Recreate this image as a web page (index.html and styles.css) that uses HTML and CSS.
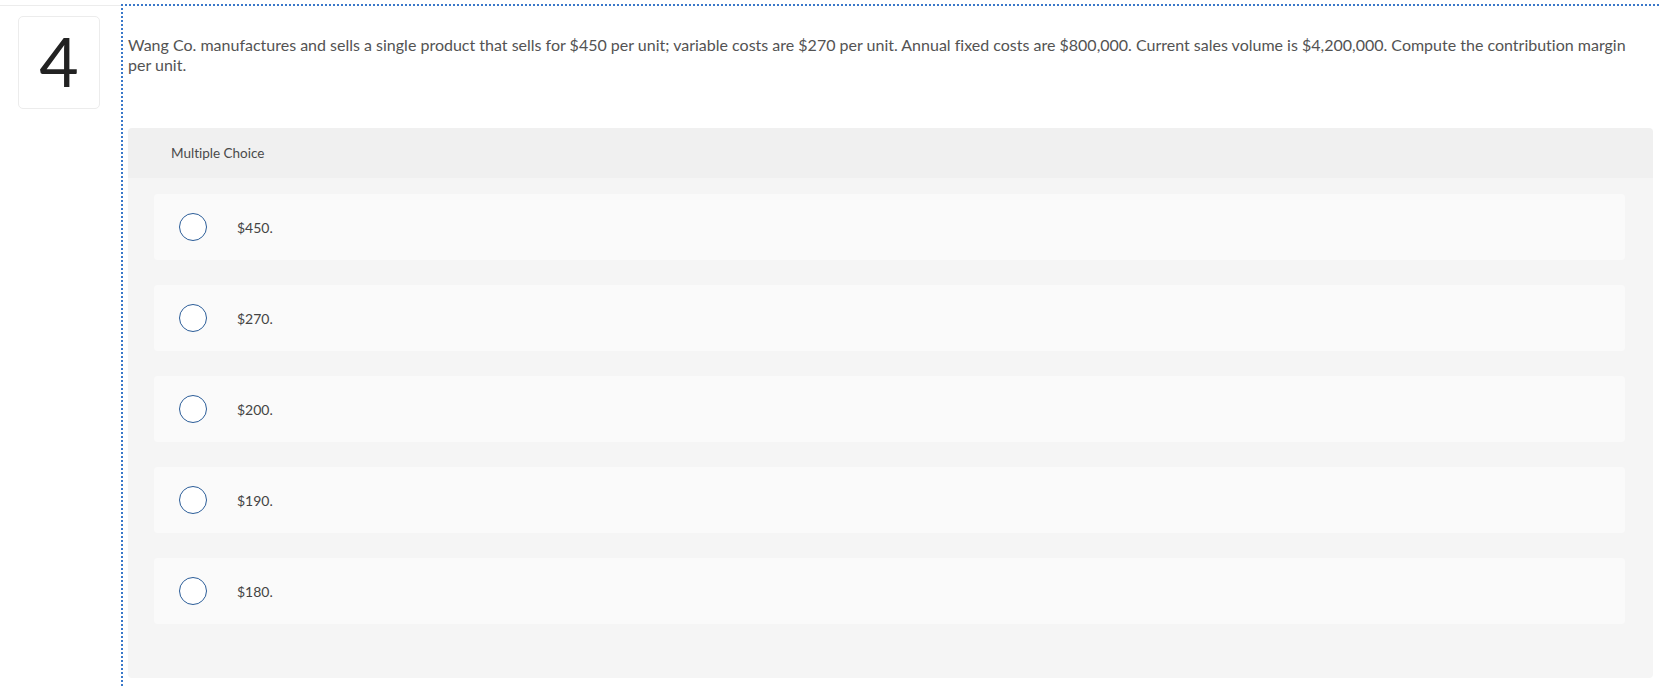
FILE: index.html
```html
<!DOCTYPE html>
<html lang="en">
<head>
<meta charset="utf-8">
<title>Question 4</title>
<link rel="stylesheet" href="styles.css">
</head>
<body>
<div class="page">
  <div class="side">
    <div class="qnum">4</div>
  </div>
  <div class="main">
    <p class="prompt">Wang Co. manufactures and sells a single product that sells for $450 per unit; variable costs are $270 per unit. Annual fixed costs are $800,000. Current sales volume is $4,200,000. Compute the contribution margin per unit.</p>
    <div class="panel">
      <div class="panel-head">Multiple Choice</div>
      <div class="panel-body">
        <div class="choice"><span class="radio"></span><span class="label">$450.</span></div>
        <div class="choice"><span class="radio"></span><span class="label">$270.</span></div>
        <div class="choice"><span class="radio"></span><span class="label">$200.</span></div>
        <div class="choice"><span class="radio"></span><span class="label">$190.</span></div>
        <div class="choice"><span class="radio"></span><span class="label">$180.</span></div>
      </div>
    </div>
  </div>
</div>
</body>
</html>
```

FILE: styles.css
```css
html, body {
  margin: 0;
  padding: 0;
  background: #ffffff;
}

body {
  font-family: Lato, "Open Sans", "Liberation Sans", sans-serif;
  font-variant-ligatures: none;
  color: #333333;
  overflow: hidden;
}

.page {
  display: flex;
  padding-top: 4px;
  height: 682px;
  overflow: hidden;
}

.side {
  width: 121px;
  flex: none;
  margin-top: 1px;
  border-top: 1px solid #ececec;
}

.qnum {
  box-sizing: border-box;
  width: 82px;
  height: 93px;
  margin: 10px 0 0 18px;
  border: 1px solid #ececec;
  border-radius: 5px;
  display: flex;
  align-items: center;
  justify-content: center;
  font-size: 68px;
  line-height: 1;
  color: #222222;
  padding-bottom: 3px;
}

.main {
  flex: 1;
  border-top: 2px dotted #3a78c9;
  border-left: 2px dotted #3a78c9;
  padding: 29px 6px 0 5px;
}

.prompt {
  margin: 0;
  padding-right: 14px;
  font-size: 16px;
  line-height: 20px;
  color: #535353;
}

.panel {
  margin-top: 53px;
  border-radius: 4px;
  overflow: hidden;
}

.panel-head {
  height: 50px;
  background: #f0f0f0;
  display: flex;
  align-items: center;
  padding-left: 43px;
  font-size: 13.5px;
  color: #4a4a4a;
}

.panel-body {
  background: #f5f5f5;
  padding: 16px 28px 54px 26px;
  display: flex;
  flex-direction: column;
  gap: 25px;
}

.choice {
  height: 66px;
  background: #fafafa;
  border-radius: 4px;
  display: flex;
  align-items: center;
  padding-left: 25px;
}

.radio {
  box-sizing: border-box;
  width: 28px;
  height: 28px;
  border: 1.5px solid #2b5d98;
  border-radius: 50%;
  background: #ffffff;
  flex: none;
}

.label {
  margin-left: 30px;
  font-size: 14px;
  color: #444444;
}
```
